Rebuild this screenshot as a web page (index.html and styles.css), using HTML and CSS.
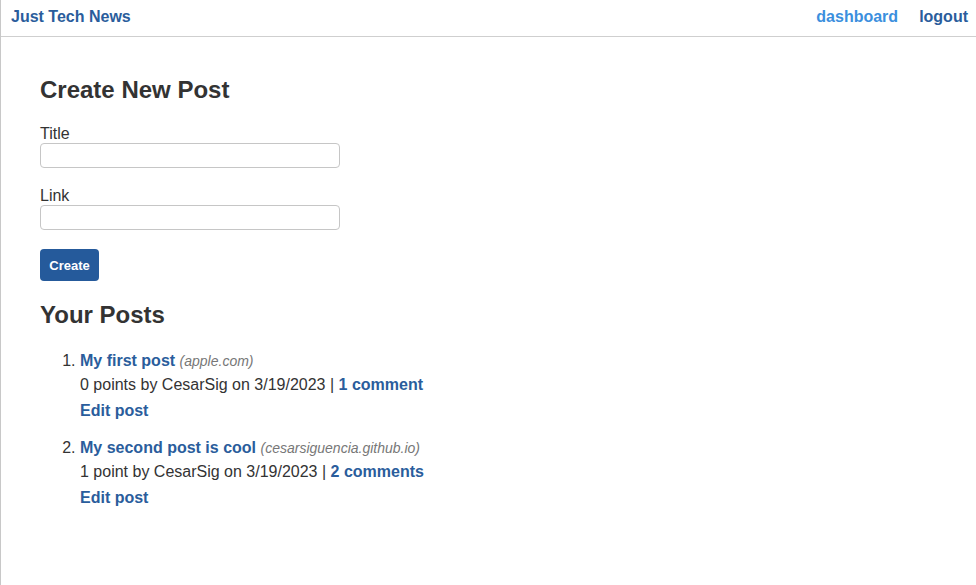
FILE: index.html
```html
<!DOCTYPE html>
<html lang="en">
<head>
<meta charset="utf-8">
<title>Just Tech News</title>
<link rel="stylesheet" href="styles.css">
</head>
<body>
<div class="page">
  <header class="topbar">
    <a class="brand" href="#">Just Tech News</a>
    <nav class="nav">
      <a class="nav-link nav-active" href="#">dashboard</a>
      <a class="nav-link" href="#">logout</a>
    </nav>
  </header>
  <main class="main">
    <h2 class="heading">Create New Post</h2>
    <form class="post-form">
      <label class="field-label" for="title">Title</label>
      <input class="field-input" id="title" type="text">
      <label class="field-label" for="link">Link</label>
      <input class="field-input" id="link" type="text">
      <button class="btn" type="button">Create</button>
    </form>
    <h2 class="heading">Your Posts</h2>
    <ol class="post-list">
      <li class="post">
        <div class="post-line"><a class="post-title" href="#">My first post</a> <span class="post-domain">(apple.com)</span></div>
        <div class="post-line">0 points by CesarSig on 3/19/2023 | <a class="post-link" href="#">1 comment</a></div>
        <a class="post-edit" href="#">Edit post</a>
      </li>
      <li class="post">
        <div class="post-line"><a class="post-title" href="#">My second post is cool</a> <span class="post-domain">(cesarsiguencia.github.io)</span></div>
        <div class="post-line">1 point by CesarSig on 3/19/2023 | <a class="post-link" href="#">2 comments</a></div>
        <a class="post-edit" href="#">Edit post</a>
      </li>
    </ol>
  </main>
</div>
</body>
</html>
```

FILE: styles.css
```css
* { box-sizing: border-box; }
html, body { margin: 0; padding: 0; background: #fff; }
body {
  font-family: "Liberation Sans", Arial, sans-serif;
  font-size: 16px;
  color: #333;
}
.page {
  min-height: 585px;
  border-left: 1px solid #c8c8c8;
}
a { text-decoration: none; }
.topbar {
  height: 37px;
  display: flex;
  align-items: center;
  justify-content: space-between;
  padding: 0 8px 2px 10px;
  border-bottom: 1px solid #cfcfcf;
}
.brand {
  font-weight: bold;
  color: #2a5d9c;
  font-size: 16px;
}
.nav { display: flex; gap: 21px; }
.nav-link {
  font-weight: bold;
  font-size: 16px;
  color: #2a5d9c;
}
.nav-active { color: #3b8fde; }
.main {
  padding: 39px 0 0 39px;
}
.heading {
  margin: 0;
  font-size: 24px;
  font-weight: bold;
  color: #333;
  line-height: 28px;
}
.post-form {
  display: flex;
  flex-direction: column;
  align-items: flex-start;
  padding-top: 20px;
  padding-bottom: 20px;
}
.field-label {
  line-height: 19px;
  font-size: 16px;
}
.field-input {
  width: 300px;
  height: 25px;
  margin-bottom: 18px;
  border: 1px solid #c6c6c6;
  border-radius: 4px;
  background: #fff;
  font: inherit;
  padding: 2px 6px;
}
.btn {
  margin-top: 1px;
  width: 59px;
  height: 32px;
  padding: 0;
  background: #255a9b;
  color: #fff;
  font-family: inherit;
  font-weight: bold;
  font-size: 13px;
  border: none;
  border-radius: 4px;
}
.post-list {
  margin: 20px 0 0;
  padding-left: 40px;
}
.post {
  line-height: 24px;
  margin-bottom: 14px;
}
.post-title {
  font-weight: bold;
  color: #2a5d9c;
}
.post-domain {
  font-style: italic;
  font-size: 14px;
  color: #777;
}
.post-link {
  font-weight: bold;
  color: #2a5d9c;
}
.post-edit {
  display: block;
  margin-top: 2px;
  margin-bottom: -1px;
  font-weight: bold;
  color: #2a5d9c;
}
```
